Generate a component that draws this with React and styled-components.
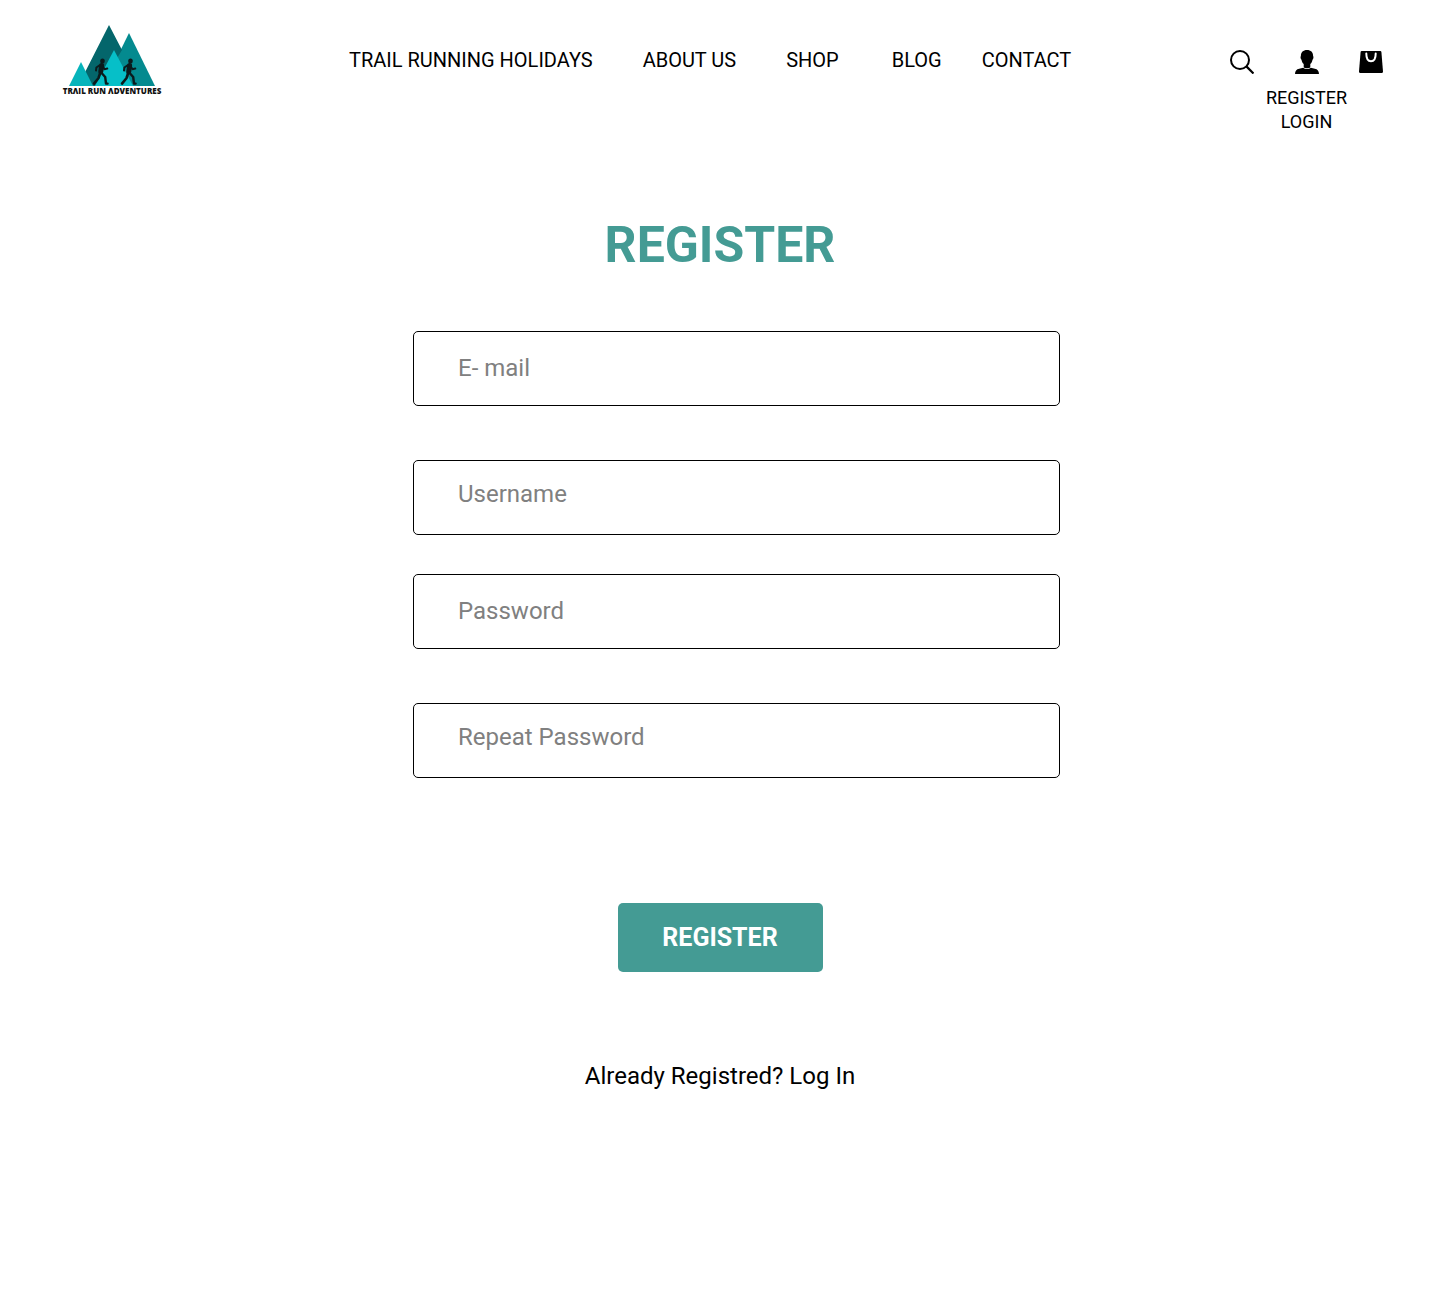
import React from "react";
import styled, { createGlobalStyle } from "styled-components";

const GlobalStyle = createGlobalStyle`
  *, *::before, *::after { box-sizing: border-box; }
  body {
    margin: 0;
    background: #fff;
    color: #000;
    font-family: Roboto, "Liberation Sans", sans-serif;
  }
`;

const Header = styled.header`
  display: grid;
  grid-template-columns: 288px 1fr auto;
  align-items: start;
  padding: 24px 56px 0 61px;
`;

const Brand = styled.a`
  display: flex;
  flex-direction: column;
  align-items: center;
  width: 102px;
  color: #111;
  text-decoration: none;
`;

const BrandName = styled.span`
  font: 800 8px/10px "Open Sans", "Noto Sans", sans-serif;
  white-space: nowrap;
`;

const Nav = styled.nav`
  display: flex;
  padding-top: 24px;
`;

const NavLink = styled.a`
  margin-left: ${({ $gap }) => $gap}px;
  color: inherit;
  font-size: 20px;
  line-height: 24px;
  text-decoration: none;
  white-space: nowrap;
`;

const Account = styled.div`
  display: flex;
  flex-direction: column;
  gap: 12px;
  padding-top: 26px;
`;

const IconRow = styled.div`
  display: flex;
  gap: 40px;
`;

const IconButton = styled.button`
  display: block;
  width: 25px;
  height: 24px;
  padding: 0;
  border: 0;
  background: none;
  color: inherit;
  cursor: pointer;

  svg { display: block; }
`;

const AccountLinks = styled.nav`
  display: flex;
  flex-direction: column;
  align-items: center;
`;

const AccountLink = styled.a`
  color: inherit;
  font-size: 18px;
  line-height: 24px;
  text-decoration: none;
`;

const Main = styled.main`
  display: flex;
  flex-direction: column;
  align-items: center;
  padding: 81px 24px;
`;

const Title = styled.h1`
  margin: 0 0 56px;
  color: #449b94;
  font-size: 50px;
  font-weight: 700;
  line-height: 60px;
`;

const Form = styled.form`
  display: flex;
  flex-direction: column;
  align-items: center;
  width: 100%;
  max-width: 680px;
`;

const Fields = styled.div`
  display: flex;
  flex-direction: column;
  gap: 39px;
  width: 100%;
  padding-left: 33px;
`;

const FieldPair = styled.div`
  display: flex;
  flex-direction: column;
  gap: 54px;
`;

const Input = styled.input`
  width: 100%;
  height: 75px;
  padding: 0 44px ${({ $raised }) => ($raised ? 8 : 2)}px;
  border: 1px solid #000;
  border-radius: 5px;
  background: transparent;
  color: #000;
  font-family: inherit;
  font-size: 24px;

  &::placeholder {
    color: #808080;
    opacity: 1;
  }
`;

const SubmitButton = styled.button`
  width: 205px;
  height: 69px;
  margin: 125px 0 90px;
  border: 0;
  border-radius: 5px;
  background: #449b94;
  color: #fff;
  font-family: inherit;
  font-size: 25px;
  font-weight: 700;
  cursor: pointer;
`;

const LoginPrompt = styled.p`
  margin: 0;
  font-size: 24px;
  line-height: 28px;

  a {
    color: inherit;
    text-decoration: none;
  }
`;

const Runner = ({ x }) => (
  <g transform={`translate(${x} 34)`} fill="none" stroke="#0b1a1c" strokeLinecap="round" strokeLinejoin="round">
    <ellipse cx="9.5" cy="3" rx="2.3" ry="2.6" fill="#0b1a1c" stroke="none" />
    <path d="M8.6 7.5 7.8 13.5" strokeWidth="5" />
    <path d="M7 7 3.4 9.5 3 12.5M9.5 8l2 3.2 2.8-.6" strokeWidth="2" />
    <path d="M7.2 15 5.4 20.2 1 25.6" strokeWidth="2.6" />
    <path d="m8.6 15 3.6 4 .8 6.6h1.6" strokeWidth="2.4" />
  </g>
);

const MountainLogo = () => (
  <svg width="88" height="62" viewBox="0 0 88 62" aria-hidden="true">
    <path d="M61 9 87 62H35Z" fill="#048a8f" />
    <path d="M41 1 54 26 48 36 41 62H10Z" fill="#04666b" />
    <path d="M13 38 25 62H1Z" fill="#06b4bb" />
    <path d="M46 26 65 62H27Z" fill="#06bfc8" />
    <Runner x={25} />
    <Runner x={53} />
  </svg>
);

const SearchIcon = () => (
  <svg width="25" height="24" viewBox="0 0 25 24" fill="none" stroke="currentColor" strokeWidth="2" aria-hidden="true">
    <circle cx="11" cy="10" r="9" />
    <path d="m17.4 16.4 7.1 7.1" strokeWidth="2.2" />
  </svg>
);

const UserIcon = () => (
  <svg width="25" height="24" viewBox="0 0 25 24" fill="currentColor" aria-hidden="true">
    <path d="M13 0C9.200 0 6.800 2.200 6.900 6c-.7.500-.4 3.200.6 3.700.3 1.900 1 3.200 2.200 4.300v3.300c.9 1.400 5.700 1.400 6.600 0V14c1.200-1.100 1.900-2.400 2.200-4.300 1-.5 1.300-3.200.6-3.700C19.200 2.200 16.800 0 13 0Z" />
    <path d="M1 24c.1-3 1.400-4.700 4.200-5.200l4-1.100c1.800 1.700 5.800 1.700 7.600 0l4 1.100c2.800.5 4.100 2.200 4.200 5.200Z" />
  </svg>
);

const BagIcon = () => (
  <svg width="25" height="24" viewBox="0 0 25 24" aria-hidden="true">
    <path d="M2.7 1h18.600c.6 0 1 .4 1.100 1L24 21.500c0 .9-.5 1.500-1.300 1.500H1.300C.5 23 0 22.400 0 21.500L1.600 2c.1-.6.500-1 1.100-1Z" fill="currentColor" />
    <path d="M7.300 3.500c0 5.500 1.700 7.800 4.700 7.800s4.700-2.300 4.700-7.800" fill="none" stroke="#fff" strokeWidth="2" strokeLinecap="round" />
  </svg>
);

const navItems = [
  { label: "TRAIL RUNNING HOLIDAYS", gap: 0 },
  { label: "ABOUT US", gap: 50 },
  { label: "SHOP", gap: 50 },
  { label: "BLOG", gap: 53 },
  { label: "CONTACT", gap: 40 },
];

const fieldPairs = [
  [
    { name: "email", type: "email", label: "E- mail" },
    { name: "username", type: "text", label: "Username" },
  ],
  [
    { name: "password", type: "password", label: "Password" },
    { name: "repeat-password", type: "password", label: "Repeat Password" },
  ],
];

export default function App() {
  return (
    <>
      <GlobalStyle />
      <Header>
        <Brand href="#home">
          <MountainLogo />
          <BrandName>TRΛIL RUN ΛDVENTURES</BrandName>
        </Brand>
        <Nav aria-label="Main">
          {navItems.map(({ label, gap }) => (
            <NavLink key={label} href="#" $gap={gap}>{label}</NavLink>
          ))}
        </Nav>
        <Account>
          <IconRow>
            <IconButton type="button" aria-label="Search"><SearchIcon /></IconButton>
            <IconButton type="button" aria-label="Account"><UserIcon /></IconButton>
            <IconButton type="button" aria-label="Shopping bag"><BagIcon /></IconButton>
          </IconRow>
          <AccountLinks aria-label="Account">
            <AccountLink href="#register">REGISTER</AccountLink>
            <AccountLink href="#login">LOGIN</AccountLink>
          </AccountLinks>
        </Account>
      </Header>
      <Main>
        <Title>REGISTER</Title>
        <Form onSubmit={(event) => event.preventDefault()}>
          <Fields>
            {fieldPairs.map((pair) => (
              <FieldPair key={pair[0].name}>
                {pair.map(({ name, type, label }, index) => (
                  <Input
                    key={name}
                    id={name}
                    name={name}
                    type={type}
                    placeholder={label}
                    aria-label={label}
                    $raised={index === 1}
                  />
                ))}
              </FieldPair>
            ))}
          </Fields>
          <SubmitButton type="submit">REGISTER</SubmitButton>
        </Form>
        <LoginPrompt>
          Already Registred? <a href="#login">Log In</a>
        </LoginPrompt>
      </Main>
    </>
  );
}
